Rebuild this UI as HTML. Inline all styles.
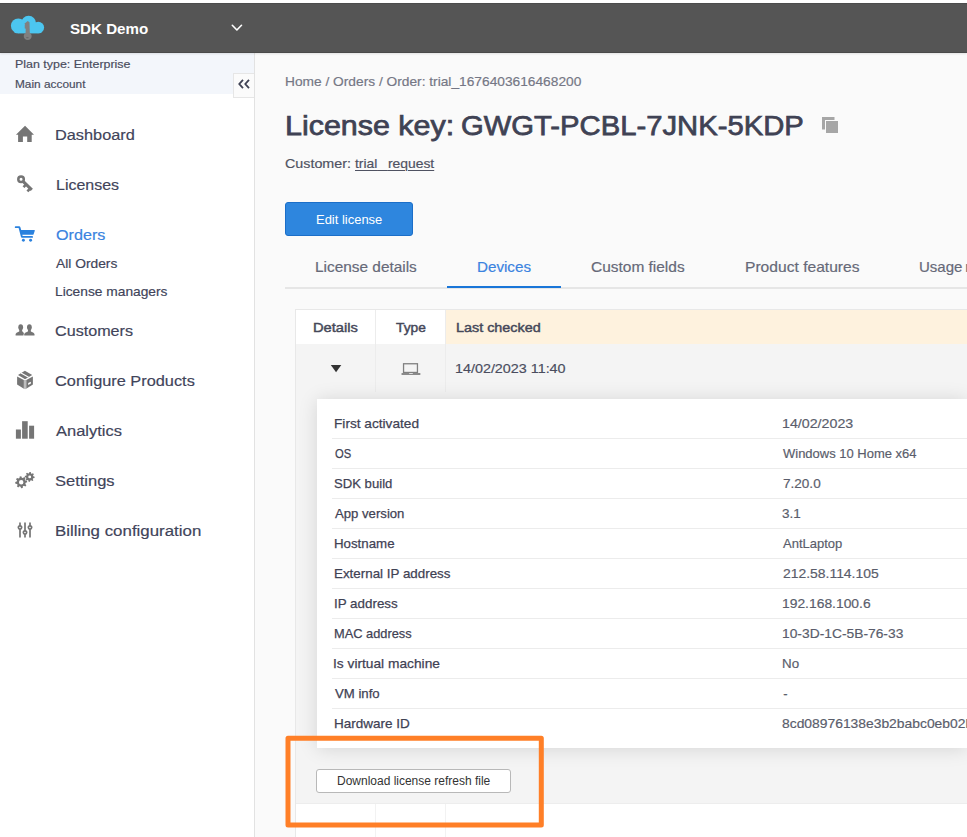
<!DOCTYPE html>
<html lang="en">
<head>
<meta charset="utf-8">
<title>License key: GWGT-PCBL-7JNK-5KDP</title>
<style>
html,body{margin:0;padding:0;}
body{width:967px;height:837px;overflow:hidden;background:#ffffff;position:relative;font-family:"Liberation Sans",sans-serif;}
.abs{position:absolute;}
.t{position:absolute;white-space:nowrap;transform-origin:0 0;}
#topbar{left:0;top:3px;width:967px;height:50px;background:#555555;border-top:1px solid #4c4c4c;border-bottom:1px solid #4a4a4a;box-sizing:border-box;box-shadow:0 1px 2px rgba(0,0,0,0.10);}
#sidebar{left:0;top:53px;width:254px;height:784px;background:#ffffff;border-right:1px solid #e2e2e2;}
#plan{left:0;top:53px;width:254px;height:41px;background:#f3f6fb;}
#collapse{left:233px;top:73px;width:21px;height:25px;background:#fbfbfb;border:1px solid #e6e6e6;border-right:none;box-sizing:border-box;}
#main{left:255px;top:53px;width:712px;height:784px;background:#fafafa;}
#editbtn{left:285px;top:202px;width:128px;height:34px;background:#2e86de;border:1px solid #1b6ec8;border-radius:3px;box-sizing:border-box;}
#tabline{left:285px;top:287px;width:682px;height:2px;background:#e6e6e6;}
#tabactive{left:447px;top:286px;width:114px;height:2px;background:#1976d8;}
#tbl{left:295px;top:309px;width:672px;height:528px;background:#ffffff;border-left:1px solid #e8e8e8;border-top:1px solid #e8e8e8;box-sizing:border-box;}
#thsort{left:446px;top:310px;width:521px;height:34px;background:#fef2de;}
#rowbg{left:296px;top:344px;width:671px;height:460px;background:#f4f4f4;border-bottom:1px solid #ededed;box-sizing:border-box;}
.vline{width:1px;background:#ececec;}
#card{left:317px;top:399px;width:650px;height:349px;background:#ffffff;box-shadow:0 1px 18px rgba(0,0,0,0.13);}
.hl{left:332px;width:635px;height:1px;background:#ececec;}
#dlbtn{left:316px;top:769px;width:195px;height:24px;background:#ffffff;border:1px solid #b8b8b8;border-radius:3px;box-sizing:border-box;}
svg{position:absolute;overflow:visible;}
</style>
</head>
<body>
<div class="abs" id="sidebar"></div>
<div class="abs" id="plan"></div>
<div class="abs" id="main"></div>
<div class="abs" id="collapse"></div>
<div class="abs" id="topbar"></div>

<div class="abs" id="editbtn"></div>
<div class="abs" id="tabline"></div>
<div class="abs" id="tabactive"></div>

<div class="abs" id="tbl"></div>
<div class="abs" id="thsort"></div>
<div class="abs" id="rowbg"></div>
<div class="abs vline" style="left:375px;top:310px;height:82px;"></div>
<div class="abs vline" style="left:445px;top:310px;height:82px;"></div>
<div class="abs vline" style="left:375px;top:804px;height:33px;background:#f2f2f2;"></div>
<div class="abs vline" style="left:445px;top:804px;height:33px;background:#f2f2f2;"></div>
<div class="abs" id="card"></div>
<div class="abs hl" style="top:438px;"></div>
<div class="abs hl" style="top:468px;"></div>
<div class="abs hl" style="top:498px;"></div>
<div class="abs hl" style="top:528px;"></div>
<div class="abs hl" style="top:558px;"></div>
<div class="abs hl" style="top:588px;"></div>
<div class="abs hl" style="top:618px;"></div>
<div class="abs hl" style="top:648px;"></div>
<div class="abs hl" style="top:678px;"></div>
<div class="abs hl" style="top:708px;"></div>
<div class="abs" id="dlbtn"></div>


<!--ICONS_START-->
<svg width="967" height="837" viewBox="0 0 967 837" style="left:0;top:0;">
<!-- cloud logo -->
<g>
<g fill="#4cc6f0"><circle cx="18.3" cy="25.8" r="7.4"/><circle cx="28.6" cy="23.2" r="7.5"/><circle cx="38.3" cy="27.5" r="5.8"/><rect x="18.3" y="26" width="20" height="7.2"/><rect x="14" y="28.5" width="28" height="4.7" rx="2.3"/></g>
<path fill="#808080" d="M27.7,20.9 L29.5,22.3 L29.8,32.8 A3.95,3.95 0 1 1 25.6,32.8 L25.7,28.7 L24.3,27.9 L25.2,26.9 L24.3,25.9 L25.2,24.9 L24.4,23.8 Z"/>
<rect x="26.1" y="37" width="2.6" height="1.2" rx="0.6" fill="#6a6a6a"/>
</g>
<!-- header chevron -->
<path d="M232.3,25.3 L236.9,30.0 L241.5,25.3" fill="none" stroke="#ffffff" stroke-width="1.6" stroke-linecap="round" stroke-linejoin="round"/>
<!-- collapse chevrons -->
<path d="M243.0,79.9 L239.3,84 L243.0,88.1 M249.0,79.9 L245.3,84 L249.0,88.1" fill="none" stroke="#3f4254" stroke-width="1.8" stroke-linecap="butt" stroke-linejoin="miter"/>
<!-- home -->
<path fill="#757575" d="M25.05,125.85 L34,134.7 L31.7,134.7 L31.7,141.9 L27.2,141.9 L27.2,136.4 L22.9,136.4 L22.9,141.9 L18.1,141.9 L18.1,134.7 L15.95,134.7 Z"/>
<!-- key -->
<g fill="none" stroke="#757575">
<circle cx="21.05" cy="179.35" r="2.75" stroke-width="2.5"/>
<path d="M23.3,181.7 L31.8,189.9" stroke-width="3.1"/>
<path d="M26,184.6 L23.5,187.1" stroke-width="2.6"/>
<path d="M30.1,188.6 L27.4,191.3" stroke-width="2.6"/>
</g>
<!-- cart -->
<g fill="#2b82de">
<path d="M15.6,226.3 L19.2,226.3 Q20,226.3 20.3,227.1 L21.2,229.9 L34.2,229.9 Q35.1,229.9 34.8,230.8 L33.6,234.2 Q33.4,234.8 32.6,234.8 L22.3,234.8 L22.6,236 L32.2,236 Q33,236 33,236.9 Q33,237.8 32.2,237.8 L21.9,237.8 Q21.2,237.8 21,237.1 L18.6,228.1 L15.6,228.1 Q14.8,228.1 14.8,227.2 Q14.8,226.3 15.6,226.3 Z"/>
<circle cx="23.4" cy="240.2" r="1.45"/>
<circle cx="30.6" cy="240.2" r="1.45"/>
</g>
<!-- customers -->
<g fill="#757575">
<ellipse cx="20.7" cy="327.3" rx="2.4" ry="3.1"/>
<path d="M19.4,329 L22,329 L22.2,331.2 Q23.5,332 23.9,333.3 L23.4,335.5 L15.6,335.5 L15.6,334 Q15.8,332.6 19.2,331.4 Z"/>
<ellipse cx="29.4" cy="327.3" rx="2.4" ry="3.1"/>
<path d="M28.1,329 L30.7,329 L30.9,331.4 Q34.3,332.6 34.5,334 L34.5,335.5 L24.2,335.5 L24.2,334 Q24.4,332.6 27.9,331.4 Z"/>
</g>
<!-- box -->
<g>
<path fill="#757575" d="M17.1,376.4 L23.9,380 L23.9,388.7 L17.1,384.6 Z"/>
<path fill="#757575" d="M26.2,380 L32.9,376.4 L32.9,384.6 L26.2,388.7 Z"/>
<path fill="#bdbdbd" d="M23.9,380 L26.2,380 L26.2,388.7 L25.05,389.2 L23.9,388.7 Z"/>
<path fill="#757575" d="M24.9,370.8 L32.2,374.9 L25.05,379.2 L18,374.9 Z"/>
<path d="M21,372.9 L28.6,377.2" stroke="#ffffff" stroke-width="1.1" fill="none"/>
<path fill="#ffffff" d="M28.2,383 L30.9,381.7 L30.9,383.6 L28.2,384.9 Z"/>
</g>
<!-- bars -->
<g fill="#757575">
<rect x="15.9" y="429.5" width="5" height="9.2"/>
<rect x="22.1" y="421.2" width="5.6" height="17.5"/>
<rect x="29.1" y="425.7" width="5" height="13"/>
</g>
<!-- gears -->
<g fill="#757575" fill-rule="evenodd">
<path d="M25.37,480.51 L27.00,480.65 L27.20,482.30 L25.66,482.83 L25.34,483.96 L26.40,485.20 L25.37,486.52 L23.91,485.79 L22.89,486.37 L22.75,488.00 L21.10,488.20 L20.57,486.66 L19.44,486.34 L18.20,487.40 L16.88,486.37 L17.61,484.91 L17.03,483.89 L15.40,483.75 L15.20,482.10 L16.74,481.57 L17.06,480.44 L16.00,479.20 L17.03,477.88 L18.49,478.61 L19.51,478.03 L19.65,476.40 L21.30,476.20 L21.83,477.74 L22.96,478.06 L24.20,477.00 L25.52,478.03 L24.79,479.49 Z M23.45,482.20 A2.25,2.25 0 1 0 18.95,482.20 A2.25,2.25 0 1 0 23.45,482.20 Z"/>
<path d="M33.34,476.26 L34.64,476.64 L34.52,478.01 L33.18,478.17 L32.73,479.02 L33.38,480.21 L32.32,481.10 L31.26,480.25 L30.34,480.54 L29.96,481.84 L28.59,481.72 L28.43,480.38 L27.58,479.93 L26.39,480.58 L25.50,479.52 L26.35,478.46 L26.06,477.54 L24.76,477.16 L24.88,475.79 L26.22,475.63 L26.67,474.78 L26.02,473.59 L27.08,472.70 L28.14,473.55 L29.06,473.26 L29.44,471.96 L30.81,472.08 L30.97,473.42 L31.82,473.87 L33.01,473.22 L33.90,474.28 L33.05,475.34 Z M31.15,476.90 A1.45,1.45 0 1 0 28.25,476.90 A1.45,1.45 0 1 0 31.15,476.90 Z"/>
</g>
<!-- sliders -->
<g stroke="#757575" fill="#ffffff" stroke-linecap="round">
<path d="M20,523.2 V536.8 M25,523.2 V536.8 M30,523.2 V536.8" stroke-width="1.7" fill="none"/>
<circle cx="20" cy="527.5" r="1.65" stroke-width="1.7"/>
<circle cx="25" cy="532.5" r="1.65" stroke-width="1.7"/>
<circle cx="30" cy="527.5" r="1.65" stroke-width="1.7"/>
</g>
<!-- copy icon -->
<rect x="822" y="117" width="12.5" height="12.5" fill="#a6a6a6"/>
<rect x="825" y="120" width="14" height="14" fill="#fafafa"/>
<rect x="826" y="121" width="12" height="12" fill="#a6a6a6"/>
<!-- triangle -->
<path d="M330.8,365 L341.3,365 L336.05,372.3 Z" fill="#333333"/>
<!-- laptop -->
<rect x="403.55" y="363.75" width="13.9" height="8.7" fill="none" stroke="#808080" stroke-width="1.3"/>
<rect x="401.4" y="373" width="19.1" height="1.9" rx="0.7" fill="#8a8a8a"/>
<rect x="409.2" y="373" width="3.6" height="0.8" fill="#f4f4f4"/>
<!-- orange highlight -->
<rect x="288" y="738.2" width="253.3" height="86.7" fill="none" stroke="#ff7f27" stroke-width="5" stroke-linejoin="round"/>
</svg>
<!--ICONS_END-->
<span class="t" id="t0" style="left:70.03px;top:20px;font-size:15px;line-height:17px;font-weight:700;color:#ffffff;transform:scaleX(1.0087);">SDK Demo</span>
<span class="t" id="t1" style="left:15.14px;top:58px;font-size:11.5px;line-height:12px;font-weight:400;color:#4a4d5e;transform:scaleX(1.0818);-webkit-text-stroke:0.18px #4a4d5e;">Plan type: Enterprise</span>
<span class="t" id="t2" style="left:15.38px;top:78px;font-size:11.5px;line-height:12px;font-weight:400;color:#4a4d5e;transform:scaleX(1.0297);-webkit-text-stroke:0.18px #4a4d5e;">Main account</span>
<span class="t" id="t3" style="left:55.37px;top:126px;font-size:15.5px;line-height:17px;font-weight:400;color:#41445a;transform:scaleX(1.0530);-webkit-text-stroke:0.18px #41445a;">Dashboard</span>
<span class="t" id="t4" style="left:55.51px;top:176px;font-size:15.5px;line-height:17px;font-weight:400;color:#41445a;transform:scaleX(1.0302);-webkit-text-stroke:0.18px #41445a;">Licenses</span>
<span class="t" id="t5" style="left:55.57px;top:226px;font-size:15.5px;line-height:17px;font-weight:400;color:#3a83e0;transform:scaleX(1.0421);-webkit-text-stroke:0.18px #3a83e0;">Orders</span>
<span class="t" id="t6" style="left:55.66px;top:256px;font-size:13.5px;line-height:15px;font-weight:400;color:#41445a;transform:scaleX(1.0219);-webkit-text-stroke:0.18px #41445a;">All Orders</span>
<span class="t" id="t7" style="left:54.90px;top:284px;font-size:13.5px;line-height:15px;font-weight:400;color:#41445a;transform:scaleX(1.0198);-webkit-text-stroke:0.18px #41445a;">License managers</span>
<span class="t" id="t8" style="left:55.02px;top:322px;font-size:15.5px;line-height:17px;font-weight:400;color:#41445a;transform:scaleX(1.0413);-webkit-text-stroke:0.18px #41445a;">Customers</span>
<span class="t" id="t9" style="left:55.00px;top:372px;font-size:15.5px;line-height:17px;font-weight:400;color:#41445a;transform:scaleX(1.0537);-webkit-text-stroke:0.18px #41445a;">Configure Products</span>
<span class="t" id="t10" style="left:55.63px;top:422px;font-size:15.5px;line-height:17px;font-weight:400;color:#41445a;transform:scaleX(1.0625);-webkit-text-stroke:0.18px #41445a;">Analytics</span>
<span class="t" id="t11" style="left:55.05px;top:472px;font-size:15.5px;line-height:17px;font-weight:400;color:#41445a;transform:scaleX(1.0641);-webkit-text-stroke:0.18px #41445a;">Settings</span>
<span class="t" id="t12" style="left:55.34px;top:522px;font-size:15.5px;line-height:17px;font-weight:400;color:#41445a;transform:scaleX(1.0882);-webkit-text-stroke:0.18px #41445a;">Billing configuration</span>
<span class="t" id="t13" style="left:284.80px;top:74px;font-size:13px;line-height:15px;font-weight:400;color:#757785;transform:scaleX(1.0568);-webkit-text-stroke:0.18px #757785;">Home / Orders / Order: trial_1676403616468200</span>
<span class="t" id="t14" style="left:285.18px;top:110px;font-size:28px;line-height:31px;font-weight:400;color:#3f4254;transform:scaleX(1.0866);-webkit-text-stroke:0.75px #3f4254;">License key:</span>
<span class="t" id="t15" style="left:460.89px;top:110px;font-size:28px;line-height:31px;font-weight:400;color:#3f4254;transform:scaleX(1.0442);-webkit-text-stroke:0.75px #3f4254;">GWGT-PCBL-7JNK-5KDP</span>
<span class="t" id="t16" style="left:285.00px;top:156px;font-size:13px;line-height:15px;font-weight:400;color:#4f5262;transform:scaleX(1.1000);-webkit-text-stroke:0.18px #4f5262;">Customer:</span>
<span class="t" id="t17" style="left:355.09px;top:156px;font-size:13px;line-height:15px;font-weight:400;color:#4f5262;transform:scaleX(1.0679);text-decoration:underline;text-underline-offset:1.5px;text-decoration-thickness:1px;-webkit-text-stroke:0.18px #4f5262;">trial<span style="letter-spacing:2.6px">_</span>request</span>
<span class="t" id="t18" style="left:316.26px;top:212px;font-size:13px;line-height:15px;font-weight:400;color:#ffffff;transform:scaleX(0.9972);">Edit license</span>
<span class="t" id="t19" style="left:315.37px;top:259px;font-size:14.5px;line-height:16px;font-weight:400;color:#666978;transform:scaleX(1.0613);-webkit-text-stroke:0.18px #666978;">License details</span>
<span class="t" id="t20" style="left:477.04px;top:259px;font-size:14.5px;line-height:16px;font-weight:400;color:#3a83e0;transform:scaleX(1.0464);-webkit-text-stroke:0.18px #3a83e0;">Devices</span>
<span class="t" id="t21" style="left:590.88px;top:259px;font-size:14.5px;line-height:16px;font-weight:400;color:#666978;transform:scaleX(1.0660);-webkit-text-stroke:0.18px #666978;">Custom fields</span>
<span class="t" id="t22" style="left:744.76px;top:259px;font-size:14.5px;line-height:16px;font-weight:400;color:#666978;transform:scaleX(1.0765);-webkit-text-stroke:0.18px #666978;">Product features</span>
<span class="t" id="t23" style="left:919.17px;top:259px;font-size:14.5px;line-height:16px;font-weight:400;color:#666978;transform:scaleX(1.0350);word-spacing:-1.2px;-webkit-text-stroke:0.18px #666978;">Usage reports</span>
<span class="t" id="t24" style="left:312.59px;top:320px;font-size:13.5px;line-height:15px;font-weight:400;color:#454859;transform:scaleX(1.0878);-webkit-text-stroke:0.45px #454859;">Details</span>
<span class="t" id="t25" style="left:395.72px;top:320px;font-size:13.5px;line-height:15px;font-weight:400;color:#454859;transform:scaleX(1.0182);-webkit-text-stroke:0.45px #454859;">Type</span>
<span class="t" id="t26" style="left:455.64px;top:320px;font-size:13.5px;line-height:15px;font-weight:400;color:#454859;transform:scaleX(1.0651);-webkit-text-stroke:0.45px #454859;">Last checked</span>
<span class="t" id="t27" style="left:455.40px;top:361px;font-size:13.5px;line-height:15px;font-weight:400;color:#4a4d5e;transform:scaleX(1.0622);-webkit-text-stroke:0.18px #4a4d5e;">14/02/2023 11:40</span>
<span class="t" id="t28" style="left:333.92px;top:416px;font-size:13.5px;line-height:15px;font-weight:400;color:#3f4254;transform:scaleX(1.0119);-webkit-text-stroke:0.25px #3f4254;">First activated</span>
<span class="t" id="t29" style="left:782.16px;top:416px;font-size:13px;line-height:15px;font-weight:400;color:#5a5d6b;transform:scaleX(1.0947);-webkit-text-stroke:0.18px #5a5d6b;">14/02/2023</span>
<span class="t" id="t30" style="left:334.77px;top:446px;font-size:13.5px;line-height:15px;font-weight:400;color:#3f4254;transform:scaleX(0.8293);-webkit-text-stroke:0.25px #3f4254;">OS</span>
<span class="t" id="t31" style="left:782.73px;top:446px;font-size:13px;line-height:15px;font-weight:400;color:#5a5d6b;transform:scaleX(0.9987);-webkit-text-stroke:0.18px #5a5d6b;">Windows 10 Home x64</span>
<span class="t" id="t32" style="left:334.49px;top:476px;font-size:13.5px;line-height:15px;font-weight:400;color:#3f4254;transform:scaleX(0.9718);-webkit-text-stroke:0.25px #3f4254;">SDK build</span>
<span class="t" id="t33" style="left:782.72px;top:476px;font-size:13px;line-height:15px;font-weight:400;color:#5a5d6b;transform:scaleX(1.0421);-webkit-text-stroke:0.18px #5a5d6b;">7.20.0</span>
<span class="t" id="t34" style="left:335.37px;top:506px;font-size:13.5px;line-height:15px;font-weight:400;color:#3f4254;transform:scaleX(0.9739);-webkit-text-stroke:0.25px #3f4254;">App version</span>
<span class="t" id="t35" style="left:782.34px;top:506px;font-size:13px;line-height:15px;font-weight:400;color:#5a5d6b;transform:scaleX(1.0408);-webkit-text-stroke:0.18px #5a5d6b;">3.1</span>
<span class="t" id="t36" style="left:334.02px;top:536px;font-size:13.5px;line-height:15px;font-weight:400;color:#3f4254;transform:scaleX(0.9840);-webkit-text-stroke:0.25px #3f4254;">Hostname</span>
<span class="t" id="t37" style="left:782.68px;top:536px;font-size:13px;line-height:15px;font-weight:400;color:#5a5d6b;transform:scaleX(1.0001);-webkit-text-stroke:0.18px #5a5d6b;">AntLaptop</span>
<span class="t" id="t38" style="left:334.02px;top:566px;font-size:13.5px;line-height:15px;font-weight:400;color:#3f4254;transform:scaleX(0.9907);-webkit-text-stroke:0.25px #3f4254;">External IP address</span>
<span class="t" id="t39" style="left:782.64px;top:566px;font-size:13px;line-height:15px;font-weight:400;color:#5a5d6b;transform:scaleX(1.0704);-webkit-text-stroke:0.18px #5a5d6b;">212.58.114.105</span>
<span class="t" id="t40" style="left:333.51px;top:596px;font-size:13.5px;line-height:15px;font-weight:400;color:#3f4254;transform:scaleX(0.9910);-webkit-text-stroke:0.25px #3f4254;">IP address</span>
<span class="t" id="t41" style="left:782.21px;top:596px;font-size:13px;line-height:15px;font-weight:400;color:#5a5d6b;transform:scaleX(1.0660);-webkit-text-stroke:0.18px #5a5d6b;">192.168.100.6</span>
<span class="t" id="t42" style="left:334.07px;top:626px;font-size:13.5px;line-height:15px;font-weight:400;color:#3f4254;transform:scaleX(0.9495);-webkit-text-stroke:0.25px #3f4254;">MAC address</span>
<span class="t" id="t43" style="left:782.17px;top:626px;font-size:13px;line-height:15px;font-weight:400;color:#5a5d6b;transform:scaleX(1.0628);-webkit-text-stroke:0.18px #5a5d6b;">10-3D-1C-5B-76-33</span>
<span class="t" id="t44" style="left:333.47px;top:656px;font-size:13.5px;line-height:15px;font-weight:400;color:#3f4254;transform:scaleX(1.0180);-webkit-text-stroke:0.25px #3f4254;">Is virtual machine</span>
<span class="t" id="t45" style="left:782.10px;top:656px;font-size:13px;line-height:15px;font-weight:400;color:#5a5d6b;transform:scaleX(1.0267);-webkit-text-stroke:0.18px #5a5d6b;">No</span>
<span class="t" id="t46" style="left:334.61px;top:686px;font-size:13.5px;line-height:15px;font-weight:400;color:#3f4254;transform:scaleX(0.9768);-webkit-text-stroke:0.25px #3f4254;">VM info</span>
<span class="t" id="t47" style="left:783.13px;top:686px;font-size:13px;line-height:15px;font-weight:400;color:#5a5d6b;transform:scaleX(1.0000);-webkit-text-stroke:0.18px #5a5d6b;">-</span>
<span class="t" id="t48" style="left:333.96px;top:716px;font-size:13.5px;line-height:15px;font-weight:400;color:#3f4254;transform:scaleX(1.0005);-webkit-text-stroke:0.25px #3f4254;">Hardware ID</span>
<span class="t" id="t49" style="left:782.44px;top:716px;font-size:13px;line-height:15px;font-weight:400;color:#5a5d6b;transform:scaleX(1.0660);-webkit-text-stroke:0.18px #5a5d6b;">8cd08976138e3b2babc0eb02b7e1d9f4</span>
<span class="t" id="t50" style="left:336.80px;top:774px;font-size:12px;line-height:14px;font-weight:400;color:#333333;transform:scaleX(0.9987);">Download license refresh file</span>
</body>
</html>
